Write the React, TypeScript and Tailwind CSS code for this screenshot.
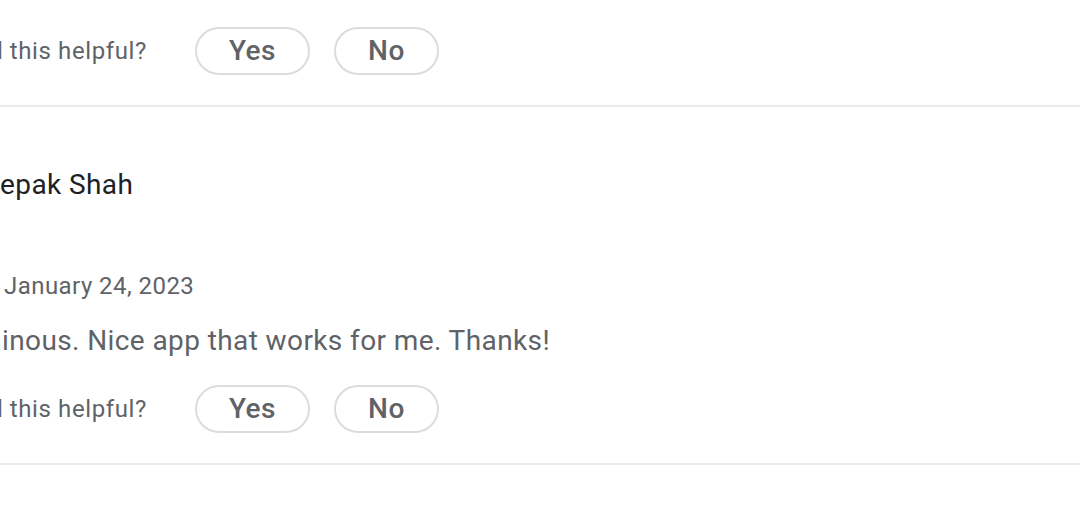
import { Star } from 'lucide-react';

function HelpfulRow() {
  return (
    <div className="flex h-12 items-center">
      <span className="text-[24px] leading-8 tracking-[0.6px] text-[#5f6368]">
        Did you find this helpful?
      </span>
      <div className="ml-12 flex gap-6">
        <button className="h-12 rounded-full border-2 border-[#dadce0] px-8 text-[28px] font-medium tracking-[0.5px] text-[#5f6368]">
          Yes
        </button>
        <button className="h-12 rounded-full border-2 border-[#dadce0] px-8 text-[28px] font-medium tracking-[0.5px] text-[#5f6368]">
          No
        </button>
      </div>
    </div>
  );
}

export default function App() {
  return (
    <div className="h-[516px] w-[1080px] overflow-hidden bg-white font-['Roboto',sans-serif]">
      <div className="-ml-[130px] w-[1300px]">
        {/* tail of the previous review */}
        <div className="border-b-2 border-[#e8eaed] pt-[27px] pb-[30px]">
          <HelpfulRow />
        </div>

        {/* Review */}
        <div className="border-b-2 border-[#e8eaed] pt-[46px] pb-[30px]">
          <div className="flex h-16 items-center gap-8">
            <div className="h-16 w-16 rounded-full bg-[#6d4c41]" />
            <span className="text-[28px] tracking-[0.4px] text-[#202124]">Deepak Shah</span>
          </div>

          <div className="mt-[53px] flex h-8 items-center gap-[14px]">
            <div className="flex w-[120px]">
              {[0, 1, 2, 3, 4].map((i) => (
                <Star key={i} size={24} className="fill-[#01875f] text-[#01875f]" />
              ))}
            </div>
            <span className="text-[24px] tracking-[0.45px] text-[#5f6368]">January 24, 2023</span>
          </div>

          <p className="mt-[19px] text-[28px] leading-10 tracking-[0.4px] text-[#5f6368]">
            Really luminous. Nice app that works for me. Thanks!
          </p>

          <div className="mt-6">
            <HelpfulRow />
          </div>
        </div>
      </div>
    </div>
  );
}
